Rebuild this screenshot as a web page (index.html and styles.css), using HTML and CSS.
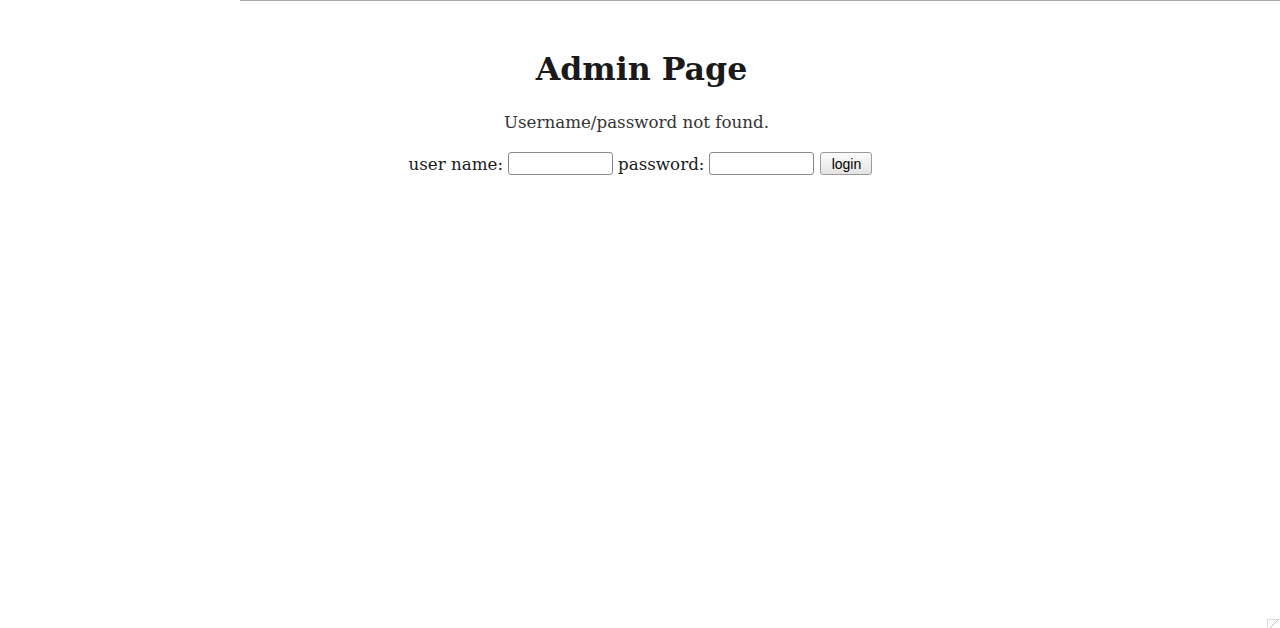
FILE: index.html
```html
<!DOCTYPE html>
<html>
<head>
<meta charset="utf-8">
<title>Admin Page</title>
<link rel="stylesheet" href="styles.css">
</head>
<body>
<div class="topline"></div>
<main class="page">
  <h1 class="title">Admin Page</h1>
  <p class="msg">Username/password not found.</p>
  <form class="login">
    <label class="lbl">user name: <input class="field" type="text"></label>
    <label class="lbl">password: <input class="field" type="password"></label>
    <button class="btn" type="button">login</button>
  </form>
</main>
<div class="grip"></div>
</body>
</html>
```
FILE: styles.css
```css
html, body {
  margin: 0;
  padding: 0;
  background: #fff;
}
body {
  font-family: "DejaVu Serif", serif;
  font-size: 16.7px;
  color: #1a1a1a;
  height: 628px;
  overflow: hidden;
  position: relative;
}
.topline {
  margin-left: 240px;
  height: 1px;
  background: #a8a8a8;
}
.page {
  text-align: center;
}
.title {
  font-size: 31.6px;
  font-weight: bold;
  margin: 49px 0 0 0;
  padding-left: 3px;
  line-height: 38px;
  color: #1a1a1a;
}
.msg {
  margin: 24px 0 0 0;
  padding-right: 7px;
  line-height: 20px;
  color: #333;
  font-size: 16.7px;
}
.login {
  margin-top: 20px;
  display: flex;
  justify-content: center;
  align-items: center;
  gap: 0;
  padding-left: 1px;
}
.lbl {
  display: inline-flex;
  align-items: center;
  gap: 5px;
  margin-right: 5px;
}
.field {
  width: 99px;
  height: 17px;
  padding: 2px 2px;
  border: 1px solid #8a8a8a;
  border-radius: 3px;
  font-size: 13px;
  box-sizing: content-box;
  margin: 0;
}
.btn {
  width: 52px;
  height: 23px;
  margin: 0 0 0 1px;
  padding: 0;
  font-family: "Liberation Sans", Arial, sans-serif;
  font-size: 14px;
  color: #000;
  background: linear-gradient(#fbfbfb, #e3e3e3);
  border: 1px solid #9a9a9a;
  border-radius: 3px;
}
.grip {
  position: absolute;
  right: 0;
  bottom: 0;
  width: 12px;
  height: 8px;
  border: 1px solid #ddd;
  border-right: none;
  border-bottom: none;
  background: linear-gradient(135deg, transparent 45%, #bbb 50%, transparent 55%);
}
```
